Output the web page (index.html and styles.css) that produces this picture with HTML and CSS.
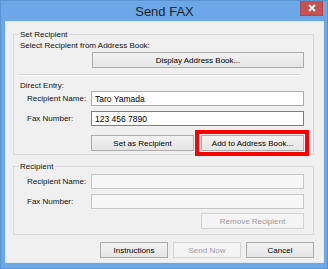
FILE: index.html
```html
<!DOCTYPE html>
<html>
<head>
    <title>Send FAX</title>
    <meta name="viewport" content="width=device-width, initial-scale=1.0">
    <link rel="stylesheet" href="styles.css">
</head>
<body>
    <div class="window">
        <div class="titlebar">
            <div class="title">Send FAX</div>
            <div class="close">
                <svg width="8" height="8" viewBox="0 0 8 8">
                    <path d="M1 1 L7 7 M7 1 L1 7" stroke="#fff" stroke-width="1.8"/>
                </svg>
            </div>
        </div>
        <div class="client">
            <div class="group group-top">
                <div class="group-title">Set Recipient</div>
                <div class="text">Select Recipient from Address Book:</div>
                <div class="row row-button">
                    <button class="button wide">Display Address Book...</button>
                </div>
                <div class="separator"></div>
                <div class="text direct">Direct Entry:</div>
                <div class="row">
                    <label class="label">Recipient Name:</label>
                    <input class="input" type="text" value="Taro Yamada">
                </div>
                <div class="row row-gap">
                    <label class="label">Fax Number:</label>
                    <input class="input focused" type="text" value="123 456 7890">
                </div>
                <div class="actions">
                    <button class="button">Set as Recipient</button>
                    <div class="highlight-wrap">
                        <button class="button">Add to Address Book...</button>
                        <div class="highlight"></div>
                    </div>
                </div>
            </div>

            <div class="group group-bottom">
                <div class="group-title">Recipient</div>
                <div class="row first">
                    <label class="label">Recipient Name:</label>
                    <input class="input" type="text" disabled>
                </div>
                <div class="row row-gap">
                    <label class="label">Fax Number:</label>
                    <input class="input" type="text" disabled>
                </div>
                <div class="actions remove">
                    <button class="button" disabled>Remove Recipient</button>
                </div>
            </div>

            <div class="footer">
                <button class="button small">Instructions</button>
                <button class="button small" disabled>Send Now</button>
                <button class="button small">Cancel</button>
            </div>
        </div>
    </div>
</body>
</html>
```

FILE: styles.css
```css
body {
    margin: 0;
    background-color: #ffffff;
    font-family: 'Liberation Sans', Arial, sans-serif;
}

.window {
    width: 328px;
    height: 269px;
    box-sizing: border-box;
    background-color: #6ca8e7;
    border: 1px solid #5a93d2;
    display: flex;
    flex-direction: column;
    padding: 0 3px 5px 4px;
}

.titlebar {
    height: 20px;
    display: flex;
    align-items: flex-start;
    justify-content: center;
    position: relative;
}

.title {
    font-family: 'Liberation Sans', Arial, sans-serif;
    font-size: 13px;
    color: #1e1e1e;
    line-height: 21px;
}

.close {
    position: absolute;
    right: 1px;
    top: 0;
    width: 21px;
    height: 14px;
    background-color: #c75050;
    border: 1px solid #b54747;
    border-top: none;
    display: flex;
    align-items: center;
    justify-content: center;
}

.client {
    flex: 1;
    background-color: #f0f0f0;
    border: 1px solid #e3e8ee;
    padding-top: 12px;
    font-size: 8px;
    color: #111;
}

.group {
    margin: 0 9px 0 7px;
    border: 1px solid #d9d9d9;
    padding: 0 9px 3px 0;
}

.group-title {
    display: table;
    margin: -6px 0 0 5px;
    padding: 0 1px;
    background-color: #f0f0f0;
    line-height: 11px;
    height: 11px;
}

.text {
    line-height: 11px;
    height: 11px;
    padding-left: 6px;
}

.row {
    display: flex;
    align-items: center;
}

.row-button {
    padding-left: 78px;
    margin-top: 1px;
}

.row-gap {
    margin-top: 5px;
}

.first {
    margin-top: 2px;
}

.label {
    width: 64px;
    padding-left: 13px;
    flex-shrink: 0;
}

.separator {
    height: 1px;
    background-color: #d5d5d5;
    border-bottom: 1px solid #fbfbfb;
    margin: 6px 4px 0 3px;
}

.direct {
    margin-top: 4px;
}

.input {
    flex: 1;
    height: 15px;
    box-sizing: border-box;
    margin: 0;
    padding: 0 3px;
    border: 1px solid #abadb3;
    background-color: #ffffff;
    font-family: 'Liberation Sans', Arial, sans-serif;
    font-size: 8.5px;
    color: #000;
    outline: none;
}

.input.focused {
    border-color: #3c8ee0;
}

.input:disabled {
    background-color: #f7f7f7;
    border-color: #c6c6c6;
}

.button {
    height: 16px;
    box-sizing: border-box;
    width: 103px;
    margin: 0;
    padding: 0;
    border: 1px solid #acacac;
    background: linear-gradient(#f2f2f2, #e5e5e5);
    font-family: 'Liberation Sans', Arial, sans-serif;
    font-size: 8px;
    color: #000;
}

.button.wide {
    flex: 1;
    width: auto;
}

.button:disabled {
    color: #9c9c9c;
    border-color: #d3d3d3;
    background: #f4f4f4;
}

.button.small {
    width: 68px;
}

.actions {
    display: flex;
    justify-content: flex-end;
    gap: 7px;
    margin-top: 9px;
}

.remove {
    margin-top: 4px;
}

.highlight-wrap {
    position: relative;
    display: flex;
}

.highlight {
    position: absolute;
    left: -6px;
    top: -5px;
    right: -5px;
    bottom: -5px;
    border: 4px solid #ff0000;
}

.group-bottom {
    margin-top: 11px;
    padding-bottom: 5px;
}

.footer {
    display: flex;
    justify-content: flex-end;
    gap: 5px;
    margin: 7px 9px 0 0;
}
```
